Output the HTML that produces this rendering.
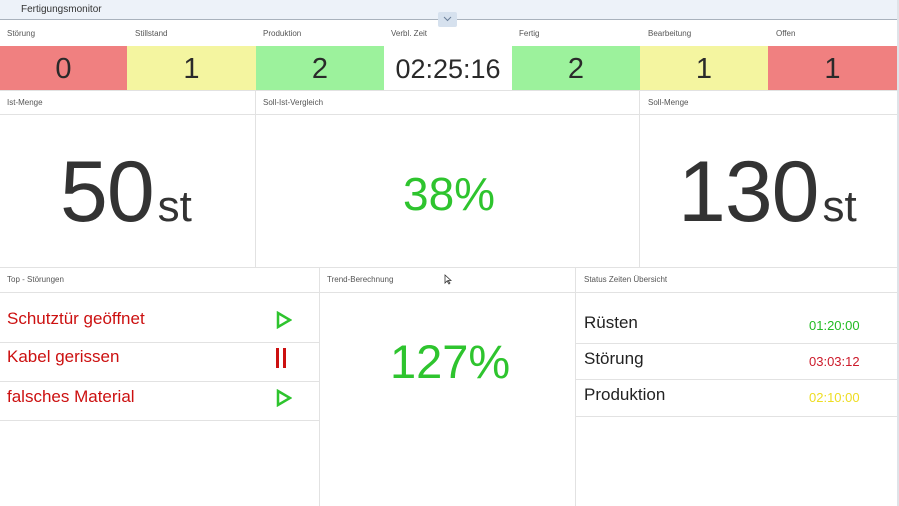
<!DOCTYPE html>
<html><head><meta charset="utf-8"><style>
*{margin:0;padding:0;box-sizing:border-box}
body{width:899px;height:506px;background:#fff;font-family:"Liberation Sans",sans-serif;position:relative;overflow:hidden;color:#222}
.a{position:absolute}
.lbl{position:absolute;font-size:8px;color:#555}
.tile{position:absolute;top:46px;height:44px;font-size:29px;text-align:center;line-height:46px;color:#2a2a2a}
.vl{position:absolute;width:1px;background:#e2e2e2}
.hl{position:absolute;height:1px;background:#e2e2e2}
.big{position:absolute;top:143px;font-size:86px;color:#333;white-space:nowrap;letter-spacing:-1px}
.big span{font-size:44px;letter-spacing:0;margin-left:4px}
.li{position:absolute;left:7px;font-size:17px;color:#cc1010}
.st{position:absolute;left:584px;font-size:17px;color:#222}
.tm{position:absolute;left:809px;font-size:13px}
</style></head><body>
<div class="a" style="left:0;top:0;width:899px;height:20px;background:#edf2f9;border-bottom:1px solid #a9b2bd"></div>
<div class="a" style="left:21px;top:4px;font-size:10px;color:#333">Fertigungsmonitor</div>
<div class="a" style="left:438px;top:12px;width:19px;height:15px;background:#d6e1ee;border-radius:2px"></div>
<svg class="a" style="left:443px;top:16px" width="9" height="6"><path d="M1 1 L4.5 4.5 L8 1" stroke="#6b7f99" fill="none" stroke-width="1"/></svg>
<div class="a" style="left:897px;top:0;width:2px;height:506px;background:#dfe3e8"></div>

<div class="lbl" style="left:7px;top:29px">Störung</div>
<div class="lbl" style="left:135px;top:29px">Stillstand</div>
<div class="lbl" style="left:263px;top:29px">Produktion</div>
<div class="lbl" style="left:391px;top:29px">Verbl. Zeit</div>
<div class="lbl" style="left:519px;top:29px">Fertig</div>
<div class="lbl" style="left:648px;top:29px">Bearbeitung</div>
<div class="lbl" style="left:776px;top:29px">Offen</div>
<div class="tile" style="left:0;width:127px;background:#f08080">0</div>
<div class="tile" style="left:127px;width:129px;background:#f4f5a0">1</div>
<div class="tile" style="left:256px;width:128px;background:#9cf29c">2</div>
<div class="tile" style="left:384px;width:128px;background:#fff;font-size:27px">02:25:16</div>
<div class="tile" style="left:512px;width:128px;background:#9cf29c">2</div>
<div class="tile" style="left:640px;width:128px;background:#f4f5a0">1</div>
<div class="tile" style="left:768px;width:129px;background:#f08080">1</div>

<div class="hl" style="left:0;top:90px;width:897px"></div>
<div class="lbl" style="left:7px;top:98px">Ist-Menge</div>
<div class="lbl" style="left:263px;top:98px">Soll-Ist-Vergleich</div>
<div class="lbl" style="left:648px;top:98px">Soll-Menge</div>
<div class="hl" style="left:0;top:114px;width:897px"></div>
<div class="vl" style="left:255px;top:90px;height:177px"></div>
<div class="vl" style="left:639px;top:90px;height:177px"></div>
<div class="big" style="left:60px">50<span>st</span></div>
<div class="big" style="left:678px">130<span>st</span></div>
<div class="a" style="left:403px;top:167px;font-size:46px;color:#2ec42e">38%</div>
<div class="hl" style="left:0;top:267px;width:897px"></div>

<div class="lbl" style="left:7px;top:275px">Top - Störungen</div>
<div class="lbl" style="left:327px;top:275px">Trend-Berechnung</div>
<div class="lbl" style="left:584px;top:275px">Status Zeiten Übersicht</div>
<div class="hl" style="left:0;top:292px;width:897px"></div>
<div class="vl" style="left:319px;top:267px;height:239px"></div>
<div class="vl" style="left:575px;top:267px;height:239px"></div>

<div class="li" style="top:309px">Schutztür geöffnet</div>
<svg class="a" style="left:276px;top:311px" width="16" height="18"><path d="M2 2 L14 9 L2 16 Z" stroke="#2ec42e" stroke-width="2.5" fill="none" stroke-linejoin="miter"/></svg>
<div class="hl" style="left:0;top:342px;width:319px"></div>
<div class="li" style="top:347px">Kabel gerissen</div>
<div class="a" style="left:276px;top:348px;width:3px;height:20px;background:#cc1010"></div>
<div class="a" style="left:283px;top:348px;width:3px;height:20px;background:#cc1010"></div>
<div class="hl" style="left:0;top:381px;width:319px"></div>
<div class="li" style="top:387px">falsches Material</div>
<svg class="a" style="left:276px;top:389px" width="16" height="18"><path d="M2 2 L14 9 L2 16 Z" stroke="#2ec42e" stroke-width="2.5" fill="none"/></svg>
<div class="hl" style="left:0;top:420px;width:319px"></div>

<div class="a" style="left:390px;top:334px;font-size:47px;color:#2ec42e">127%</div>
<svg class="a" style="left:444px;top:274px" width="8" height="11"><path d="M1 1 L1 9 L3 7 L5 10 L6 9 L4 6.5 L7 6.5 Z" fill="#fff" stroke="#333" stroke-width="0.8"/></svg>

<div class="st" style="top:313px">Rüsten</div>
<div class="tm" style="top:318px;color:#22bb22">01:20:00</div>
<div class="hl" style="left:576px;top:343px;width:321px"></div>
<div class="st" style="top:349px">Störung</div>
<div class="tm" style="top:354px;color:#cc1a2a">03:03:12</div>
<div class="hl" style="left:576px;top:379px;width:321px"></div>
<div class="st" style="top:385px">Produktion</div>
<div class="tm" style="top:390px;color:#eedd22">02:10:00</div>
<div class="hl" style="left:576px;top:416px;width:321px"></div>
</body></html>
